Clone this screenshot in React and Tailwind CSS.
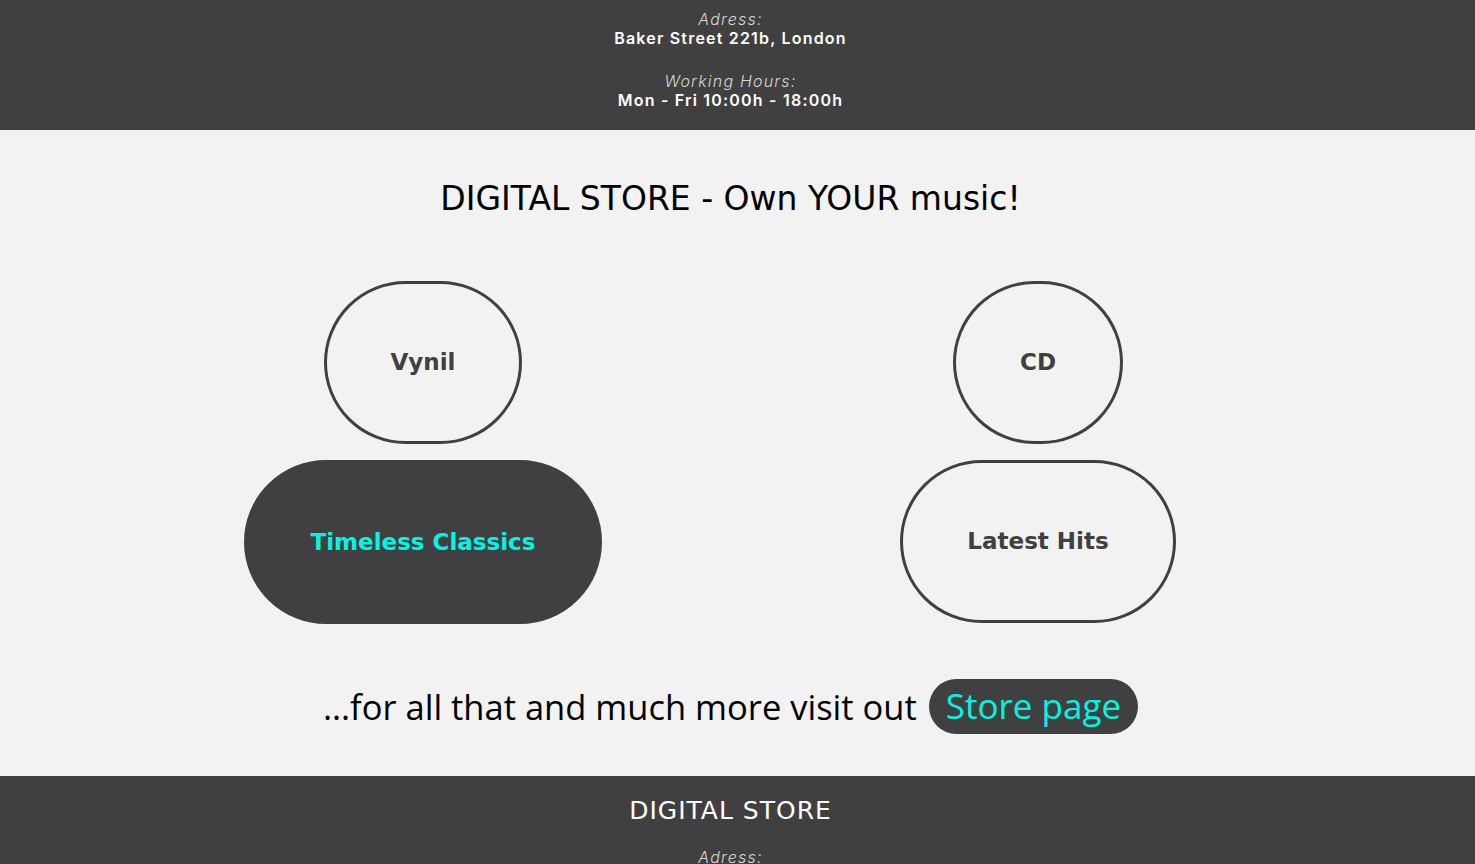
import React from "react";

const Info = () => {
  return (
    <div className="text-center text-[16px] leading-[19px] font-['Inter',sans-serif] tracking-[1.2px]">
      <p className="italic font-light text-[#d8d8d8]">Adress:</p>
      <p className="font-semibold text-white">Baker Street 221b, London</p>
      <p className="italic font-light text-[#d8d8d8] mt-[24px]">Working Hours:</p>
      <p className="font-semibold text-white">Mon - Fri 10:00h - 18:00h</p>
    </div>
  );
};

const Pill = ({ label, dark }) => {
  // same padding everywhere, width comes from the label
  if (dark) {
    return (
      <div className="rounded-full bg-[#404040] border-[3px] border-[#404040] p-16 text-[23px] leading-[30px] font-bold text-[#00f5e4] whitespace-nowrap">
        {label}
      </div>
    );
  }
  return (
    <div className="rounded-full border-[3px] border-[#404040] p-16 text-[23px] leading-[29px] font-bold text-[#404040] whitespace-nowrap">
      {label}
    </div>
  );
};

const App = () => {
  return (
    <div className="min-h-screen bg-[#f2f2f2] font-['DejaVu_Sans',sans-serif]">
      {/* top bar */}
      <header className="bg-[#404040] pt-[10px] pb-[20px] pr-[14px]">
        <Info />
      </header>

      <main className="pt-[49px] pb-[42px] pr-[14px]">
        <h1 className="text-center text-[33px] leading-[40px] text-black">
          DIGITAL STORE - Own YOUR music!
        </h1>

        <div className="w-[1230px] mx-auto grid grid-cols-2 mt-[62px]">
          <div className="flex flex-col items-center gap-[16px]">
            <Pill label="Vynil" />
            <Pill label="Timeless Classics" dark />
          </div>
          <div className="flex flex-col items-center gap-[16px]">
            <Pill label="CD" />
            <Pill label="Latest Hits" />
          </div>
        </div>

        <div className="mt-[55px] flex items-center justify-center gap-[12px] font-['Open_Sans',sans-serif] text-[34.5px] text-black">
          <span>...for all that and much more visit out</span>
          <a
            href="#"
            className="rounded-full bg-[#404040] px-[17px] h-[55px] flex items-center text-[#00f5e4] text-[35px]"
          >
            Store page
          </a>
        </div>
      </main>

      <footer className="bg-[#404040] pt-[20px] pb-[20px] pr-[14px]">
        <h2 className="text-center text-white text-[25px] leading-[30px] tracking-[1px] mb-[22px]">
          DIGITAL STORE
        </h2>
        <Info />
      </footer>
    </div>
  );
};

export default App;
